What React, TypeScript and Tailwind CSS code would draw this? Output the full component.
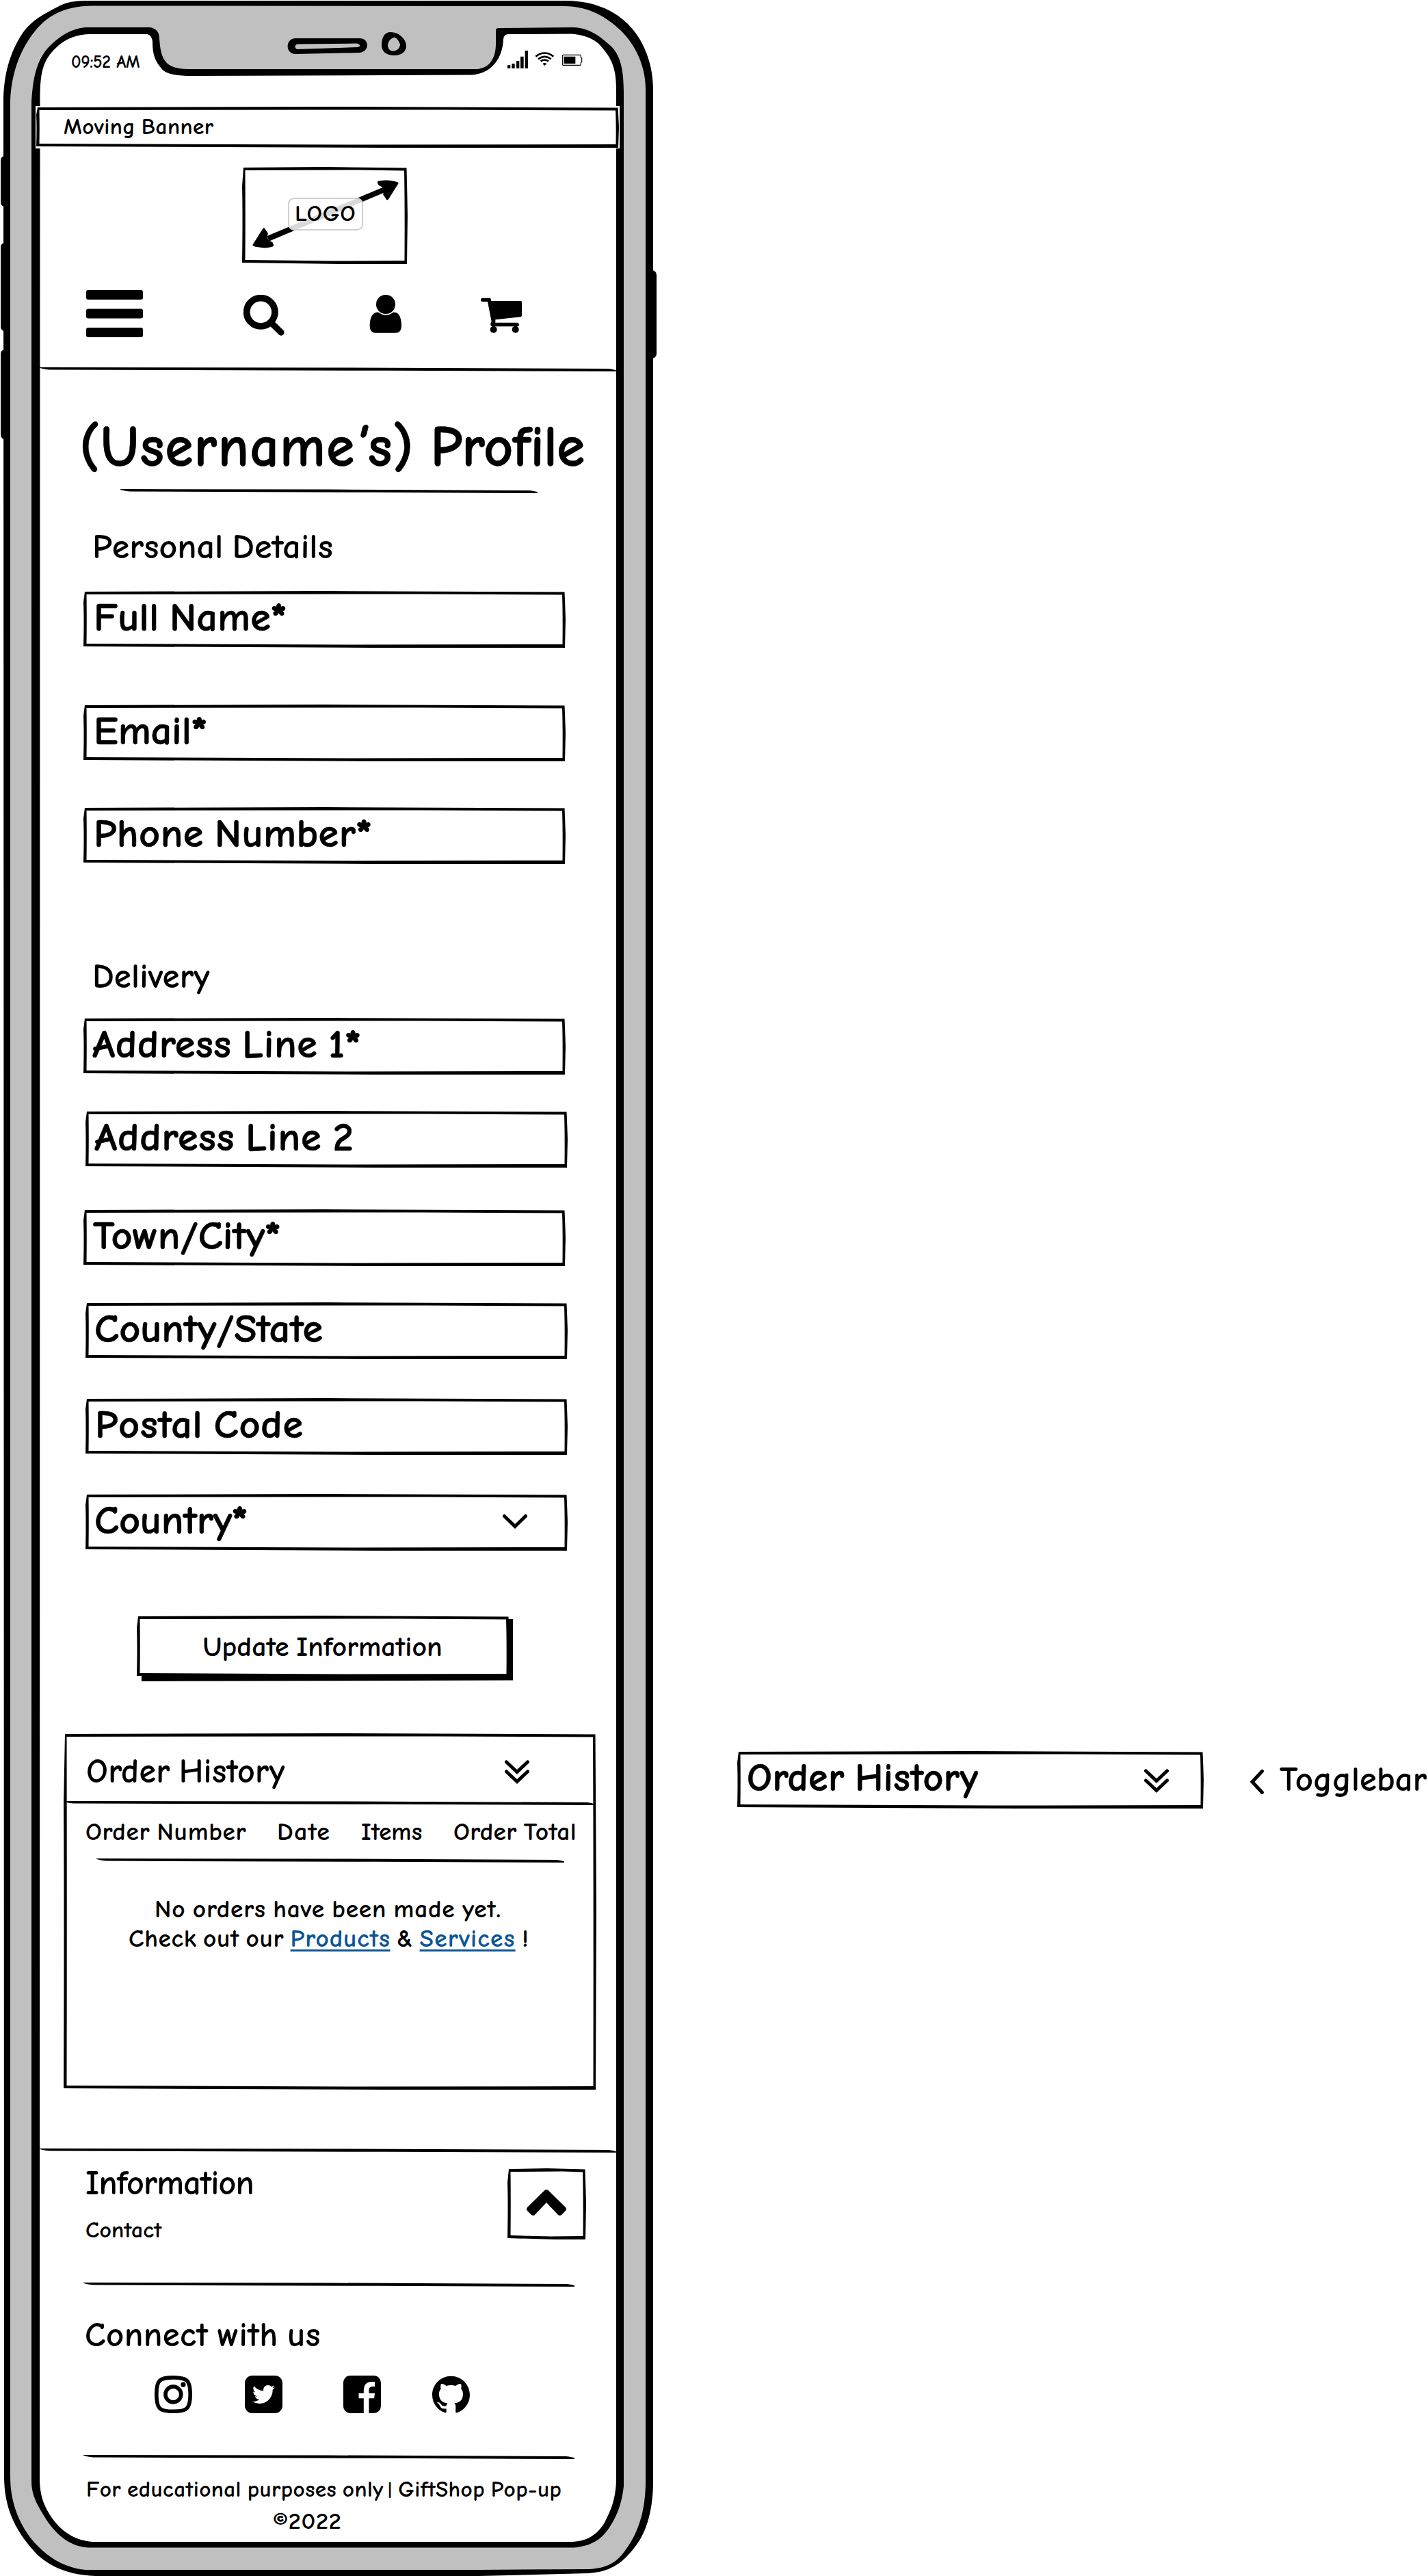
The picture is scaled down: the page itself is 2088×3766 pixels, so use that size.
import { type ReactNode } from "react";
import { FaTwitter } from "react-icons/fa";
import { SiGithub } from "react-icons/si";

/* Hand-drawn rectangle outline with slightly uneven strokes */
function Sketch({ w, h, fill = "white" }: { w: number; h: number; fill?: string }) {
  const outer = `M2 1L${w * 0.5} 0L${w - 1.5} 1.5Q${w - 0.5} ${h * 0.3} ${w} ${h * 0.5}L${w - 1} ${h}L${w * 0.6} ${h}L0 ${h - 2}Q1 ${h * 0.5} 0 ${h * 0.2}Z`;
  const inner = `M4.5 5L${w * 0.7} 4.5L${w - 5} 5.5Q${w - 4} ${h * 0.4} ${w - 4.5} ${h - 5}L${w * 0.55} ${h - 4.5}L4.5 ${h - 6}Q5 ${h * 0.5} 4.5 5Z`;
  return (
    <svg className="absolute inset-0" width={w} height={h} viewBox={`0 0 ${w} ${h}`}>
      <path d={outer} fill="black" />
      <path d={inner} fill={fill} />
    </svg>
  );
}

/* Hand-drawn divider that tapers at both ends */
function Rule({ w, className = "" }: { w: number; className?: string }) {
  return (
    <svg className={`block shrink-0 ${className}`} width={w} height={6} viewBox={`0 0 ${w} 6`}>
      <path d={`M0 0L${w * 0.5} 0.5L${w - 12} 2Q${w - 3} 3 ${w} 4.5V6L${w * 0.6} 4.8L14 3.6Q4 2.4 0 0.8Z`} />
    </svg>
  );
}

type FieldProps = { label: string; required?: boolean; className: string; text?: string; children?: ReactNode };

function Field({ label, required, className, text = "", children }: FieldProps) {
  return (
    <div className={`relative flex h-[83px] w-[705px] shrink-0 items-center justify-between pb-[4px] ${className}`}>
      <Sketch w={705} h={83} />
      <span className={`relative origin-left scale-x-[1.04] text-[58px] leading-[75px] [-webkit-text-stroke:0.5px] ${text}`}>
        {label}
        {required && <span className="[-webkit-text-stroke:2px_black]">*</span>}
      </span>
      {children}
    </div>
  );
}

function DoubleChevron({ className }: { className: string }) {
  return (
    <svg className={`relative shrink-0 ${className}`} width="36" height="36" viewBox="0 0 36 36" fill="none" stroke="black" strokeWidth="5" strokeLinecap="round">
      <path d="M2.5 3L18 17.5L33.5 3M2.5 17L18 31.5L33.5 17" />
    </svg>
  );
}

function PhoneFrame() {
  return (
    <svg className="absolute left-0 top-0" width="960" height="3766" viewBox="0 0 960 3766">
      <rect x="1" y="228" width="14" height="74" rx="6" />
      <rect x="1" y="355" width="14" height="129" rx="6" />
      <rect x="1" y="511" width="14" height="131" rx="6" />
      <rect x="944" y="395" width="16" height="129" rx="7" />
      <path d="M5 150C5 110 14 78 32 50C48 27 66 20 88 8Q102 1 125 1H830C868 2 896 14 917 34C942 58 955 95 955 130V3627C955 3668 946 3702 928 3724C908 3750 890 3760 860 3762L700 3766H140C92 3764 62 3748 40 3718C18 3690 6 3660 6 3620Z" />
      <path fill="#c0c0c0" d="M15 150C16 110 28 75 50 47C68 24 92 9 135 8.500L825 9C862 9 888 26 907 44C930 66 944 98 944 130V3627C944 3665 936 3695 920 3720C905 3744 892 3754 862 3756L700 3757H125C92 3754 66 3736 46 3712C26 3686 15 3656 15 3620Z" />
      <path d="M46 150C48 115 53 88 72 68C88 52 104 42 125 40H219C228 41 233 47 233 56C235 85 240 101 275 101H697C715 100 725 86 725 64V44Q725 41 729 41L838 40C862 41 876 52 894 68C908 82 912 105 912 135V3635C909 3660 903 3676 893 3692C882 3710 868 3722 839 3724.500H129C104 3723 84 3708 68 3684C56 3664 46 3650 46 3627Z" />
      <path fill="white" d="M58.500 150C58.500 118 60 100 70 84C84 64 102 51 130 50H215Q222 51 223 61C223 82 228 90 236 100C242 109 262 111 280 111L690 109.500C716 108 735 88 736 57Q737 50 743 50L836 49.500C862 52 874 60 884 74C897 90 901 106 901 130V3627C900 3655 893 3670 884 3688C873 3706 858 3716 833 3716H135C110 3714 92 3702 78 3684C64 3664 59 3650 58 3627Z" />
      <path fillRule="evenodd" d="M431 56H526C540 56 541 75 526 77L432 79C417 79 417 57 431 56ZM434 64.500L522 63.500Q531 67 522 69L434 72Q429 68 434 64.500Z" />
      <path fillRule="evenodd" d="M571 47C584 47 594 58 594 67C594 76 586 81 577 81C563 81 558 74 558 66C558 55 562 47 571 47ZM577 54.500C570 56 567 62 567 67C568 72 570 75 577 74.500C582 73 585 69 585 65C583 59 581 57 577 54.500Z" />
    </svg>
  );
}

export default function App() {
  return (
    <div className="relative flex h-[3766px] w-[2088px] overflow-hidden bg-white font-['Comic_Neue','Inter',sans-serif] font-bold text-black">
      <PhoneFrame />
      <main className="relative flex h-[3766px] w-[960px] shrink-0 flex-col pl-[58px] pr-[59px]">
        {/* Status bar */}
        <div className="mt-[70px] flex h-[40px] items-center justify-between pl-[46px] pr-[49px]">
          <span className="pt-[2px] text-[25.5px] leading-[40px] tracking-[-0.37px]">09:52 AM</span>
          <svg className="-mt-[6px]" width="110" height="27" viewBox="816 222 330 81">
            <path d="M816 286h13v14h-13zM835 279h13v21h-13zM855 267h13v33h-13zM873 248h14v52h-14zM893 222h13v78h-13z" />
            <g fill="none" stroke="black" strokeWidth="8">
              <path d="M940 248Q979 217 1018 248M951 259Q979 238 1007 259M962 269Q979 256 996 269" />
              <path strokeWidth="3.500" strokeLinejoin="round" d="M1060 241H1136Q1138 241 1138 252L1142 255V271L1138 275Q1138 286 1135 286H1060Q1058 286 1058 283V244Q1058 241 1060 241Z" />
            </g>
            <path d="M970 280Q979 272 988 280L979 288ZM1064 248h50v31h-50z" />
          </svg>
        </div>

        {/* Banner */}
        <div className="relative -ml-[5px] mt-[46px] flex h-[60px] w-[852px] shrink-0 items-center bg-white pb-[1px] pl-[40px] outline outline-1 outline-white">
          <Sketch w={852} h={60} />
          <span className="relative origin-left scale-x-[1.04] text-[32px] tracking-[0.4px] [word-spacing:-0.1em]">Moving Banner</span>
        </div>

        {/* Logo */}
        <div className="relative ml-[296px] mt-[28px] flex h-[142px] w-[242px] shrink-0 items-center justify-center">
          <Sketch w={242} h={142} />
          <svg className="absolute inset-0" width="242" height="142" viewBox="42 42 726 426">
            <path d="M155 357L670 140" stroke="black" strokeWidth="24" />
            <path d="M88 384L132 314Q140 304 145 318L156 334L150 350L160 366Q182 370 180 390Q150 402 112 394Q86 390 88 384ZM728 114L684 184Q677 192 672 180L660 163L666 150L656 130Q632 122 637 105Q666 96 706 104Q730 108 728 114Z" />
          </svg>
          <div className="relative mb-[5px] ml-[2px] flex h-[48px] w-[110px] items-center justify-center rounded-[9px] border-2 border-[#cfcfcf] bg-white/85 text-[32px] leading-[44px] tracking-[0.7px]">
            <span className="scale-x-110">LOGO</span>
          </div>
        </div>

        {/* Navigation */}
        <nav className="mt-[38px] flex h-[70px] shrink-0 items-start pl-[68px]">
          <svg width="84" height="70" viewBox="0 0 84 70">
            <path d="M3 0H80Q83 0 83 3V11Q83 14 80 14H3Q0 14 0 11V3Q0 0 3 0ZM3 27.500H80Q83 27.500 83 30.500V38.500Q83 41.500 80 41.500H3Q0 41.500 0 38.500V30.500Q0 27.500 3 27.500ZM3 55H80Q83 55 83 58V66Q83 69 80 69H3Q0 69 0 66V58Q0 55 3 55Z" />
          </svg>
          <svg className="ml-[146px] mt-[7px]" width="60" height="60" viewBox="48 603 180 180" fill="none" stroke="black">
            <circle cx="124" cy="679" r="62" strokeWidth="29" />
            <path d="M176 732L213 768" strokeWidth="28" strokeLinecap="round" />
          </svg>
          <svg className="ml-[124px] mt-[7px]" width="48" height="56" viewBox="600 603 144 168">
            <circle cx="672" cy="645" r="42" />
            <path d="M625 682Q632 678 641 680Q672 703 704 680Q712 678 720 682C738 692 741 720 741 740Q741 770 714 770H629Q602 770 602 740C602 718 606 692 625 682Z" />
          </svg>
          <svg className="ml-[115px] mt-[11px]" width="61" height="52" viewBox="1091 615 183 156">
            <path d="M1099 617H1130Q1135 617 1135 622L1136 630H1267Q1271 630 1271 635V694Q1271 699 1266 700L1155 712V725H1250A8.500 8.500 0 0 1 1250 742H1140Q1128 735 1138 720L1121 633H1099A8 8 0 0 1 1099 617Z" />
            <circle cx="1147" cy="755" r="15" />
            <circle cx="1243" cy="755" r="15" />
          </svg>
        </nav>
        <Rule w={843} className="mt-[43px]" />

        {/* Title */}
        <h1 className="mt-[62px] h-[97px] whitespace-nowrap pl-[58px] text-[84px] leading-[98px] [-webkit-text-stroke:0.5px] [word-spacing:-6px]">
          <span className="tracking-[1.1px]">
            (Username<span className="inline-block -translate-y-1 -skew-x-[14deg]">'</span>s)
          </span>{" "}
          <span className="tracking-[-0.8px]">Profile</span>
        </h1>
        <Rule w={610} className="ml-[118px] mt-[13px]" />

        {/* Personal details */}
        <h2 className="mt-[49px] h-[58px] origin-[77px_50%] scale-x-[1.02] pl-[77px] text-[51px] leading-[59px] [word-spacing:-0.1em]">Personal Details</h2>
        <Field className="ml-[64px] mt-[36px] pl-[15px]" text="tracking-[0.13px] [word-spacing:-0.1em]" label="Full Name" required />
        <Field className="ml-[64px] mt-[83px] pl-[15px]" text="tracking-[-0.1px]" label="Email" required />
        <Field className="ml-[64px] mt-[67px] pl-[15px]" text="tracking-[0.4px] [word-spacing:-0.1em]" label="Phone Number" required />

        {/* Delivery */}
        <h2 className="mt-[135px] h-[58px] pl-[77px] text-[51px] leading-[59px] tracking-[0.1px]">Delivery</h2>
        <Field className="ml-[64px] mt-[32px] pl-[13px]" text="tracking-[0.5px] [word-spacing:-0.1em]" label="Address Line 1" required />
        <Field className="ml-[67px] mt-[53px] pl-[13px]" text="tracking-[0.75px] [word-spacing:-0.1em]" label="Address Line 2" />
        <Field className="ml-[64px] mt-[61px] pl-[14px]" text="tracking-[-0.17px]" label="Town/City" required />
        <Field className="ml-[67px] mt-[53px] pl-[13px]" text="tracking-[-0.1px]" label="County/State" />
        <Field className="ml-[67px] mt-[57px] pl-[14px]" text="tracking-[0.65px] [word-spacing:-0.1em]" label="Postal Code" />
        <Field className="ml-[67px] mt-[57px] pl-[13px]" text="tracking-[-0.3px]" label="Country" required>
          <svg className="relative mr-[58px] mt-[2px]" width="38" height="24" viewBox="0 0 38 24" fill="none" stroke="black" strokeWidth="5" strokeLinecap="round">
            <path d="M3.500 3.500L19 18.500L34.500 3.500" />
          </svg>
        </Field>

        {/* Submit */}
        <button className="relative ml-[142px] mt-[95px] flex h-[96px] w-[550px] shrink-0 items-center justify-center pb-[4px] pr-[7px]">
          <svg className="absolute inset-0" width="550" height="96" viewBox="0 0 550 96">
            <path d="M6 7L550 5V94.500L7 96Z" />
          </svg>
          <Sketch w={545} h={90} />
          <span className="relative scale-x-[1.02] text-[41px] [word-spacing:-0.1em]">Update Information</span>
        </button>

        {/* Order history */}
        <section className="relative ml-[35px] mt-[76px] flex h-[521px] w-[779px] shrink-0 flex-col">
          <Sketch w={779} h={521} />
          <div className="relative flex h-[99px] items-center justify-between pl-[33px] pr-[98px] pt-[10px]">
            <h2 className="pt-[2px] text-[50px] leading-[60px] tracking-[0.25px] [word-spacing:-0.1em]">Order History</h2>
            <DoubleChevron className="mt-[4px]" />
          </div>
          <Rule w={777} className="relative" />
          <div className="relative mt-[18px] grid h-[46px] grid-cols-[280px_122.5px_135px_1fr] pl-[32px] text-[36px] leading-[44px] [word-spacing:-0.1em]">
            <span className="origin-left justify-self-start scale-x-[1.04] tracking-[0.65px]">Order Number</span>
            <span className="origin-left justify-self-start scale-x-[1.06] tracking-[1.1px]">Date</span>
            <span className="origin-left justify-self-start scale-x-[1.02] tracking-[0.1px]">Items</span>
            <span className="origin-left justify-self-start whitespace-nowrap scale-x-[1.04] tracking-[0.38px]">Order Total</span>
          </div>
          <Rule w={684} className="relative ml-[48px] mt-[14px]" />
          <p className="relative mt-[47px] origin-[133px_50%] scale-x-[1.04] whitespace-nowrap pl-[133px] text-[36px] leading-[43px] tracking-[0.77px] [word-spacing:-0.1em]">No orders have been made yet.</p>
          <p className="relative origin-[95px_50%] scale-x-[1.04] whitespace-nowrap pl-[95px] text-[36px] leading-[43px] tracking-[0.6px] [word-spacing:-0.12em]">
            Check out our{" "}
            <a className="text-[#0a5597] tracking-[0.8px] underline decoration-[3px] underline-offset-[4px] [text-decoration-skip-ink:none]">Products</a> &amp;{" "}
            <a className="text-[#0a5597] tracking-[1.1px] underline decoration-[3px] underline-offset-[4px] [text-decoration-skip-ink:none]">Services</a> !
          </p>
        </section>

        {/* Footer */}
        <Rule w={843} className="mt-[86px]" />
        <div className="flex h-[190px] shrink-0 justify-between pl-[67px] pr-[44px]">
          <div>
            <h3 className="mt-[15px] text-[50px] leading-[60px] tracking-[-0.85px]">Information</h3>
            <p className="mt-[18px] origin-left scale-x-[1.02] text-[33px] leading-[40px] tracking-[0.2px]">Contact</p>
          </div>
          <div className="relative mt-[23px] h-[104px] w-[115px]">
            <Sketch w={115} h={104} />
            <svg className="absolute left-[27px] top-[31px]" width="60" height="39" viewBox="0 0 60 39">
              <path d="M27 1.500Q30 -1 33 1.500L58 26Q60 29 58 31L52 37Q49.500 39 47 37L30 19L13 37Q10.500 39 8 37L2 31Q0 29 2 26Z" />
            </svg>
          </div>
        </div>
        <Rule w={718} className="ml-[64px]" />
        <h3 className="mt-[42px] h-[58px] origin-[66px_50%] scale-x-[1.02] pl-[66px] text-[50px] leading-[59px] tracking-[0.3px] [word-spacing:-0.1em]">Connect with us</h3>
        <div className="mt-[30px] flex h-[56px] shrink-0 pl-[168px]">
          <svg width="55" height="55" viewBox="77.500 99 166 166" fill="none" stroke="black">
            <path strokeWidth="17" d="M86 182C86 120 98 107.500 160 107.500S235 120 235 182S222 257 160 257S86 244 86 182Z" />
            <circle cx="160" cy="182" r="34.500" strokeWidth="17" />
            <circle cx="204" cy="139" r="11" fill="black" stroke="none" />
          </svg>
          <div className="ml-[77px] flex size-[55px] items-center justify-center rounded-[11px] bg-black">
            <FaTwitter className="size-[33px] text-white" />
          </div>
          <svg className="ml-[89px]" width="55" height="55" viewBox="905 99 166 166">
            <rect x="905" y="99" width="166" height="166" rx="32" />
            <path fill="white" d="M995 266V199H973V177H995V165Q995 126 1033 126H1044V147H1035Q1018 147 1018 163V177H1044L1041 199H1018V266Z" />
          </svg>
          <SiGithub className="ml-[75px] size-[55px]" />
        </div>
        <Rule w={718} className="ml-[64px] mt-[60px]" />
        <p className="mt-[22px] origin-[68px_50%] scale-x-[1.04] whitespace-nowrap pl-[68px] text-[32px] leading-[46px] tracking-[0.37px] [word-spacing:-0.1em]">
          For educational purposes only <span className="-ml-[2px] align-[2px] text-[24px]">|</span> GiftShop Pop-up
        </p>
        <p className="origin-[341px_50%] scale-x-110 pl-[341px] text-[33px] leading-[46px] tracking-[0.6px]">©2022</p>
      </main>

      {/* Annotation */}
      <aside className="relative mt-[2560px] flex h-[84px] items-center pl-[118px]">
        <div className="relative flex h-[84px] w-[682px] shrink-0 items-center justify-between pb-[5px] pl-[14px] pr-[51px]">
          <Sketch w={682} h={84} />
          <span className="relative text-[58px] leading-[75px] tracking-[0.4px] [-webkit-text-stroke:0.5px] [word-spacing:-0.1em]">Order History</span>
          <DoubleChevron className="mt-[9px]" />
        </div>
        <svg className="ml-[67px] mt-[6px]" width="22" height="38" viewBox="0 0 22 38" fill="none" stroke="black" strokeWidth="5" strokeLinecap="round">
          <path d="M18.500 3.500L4 19L18.500 34.500" />
        </svg>
        <span className="ml-[22px] text-[51px] leading-[60px]">Togglebar</span>
      </aside>
    </div>
  );
}
